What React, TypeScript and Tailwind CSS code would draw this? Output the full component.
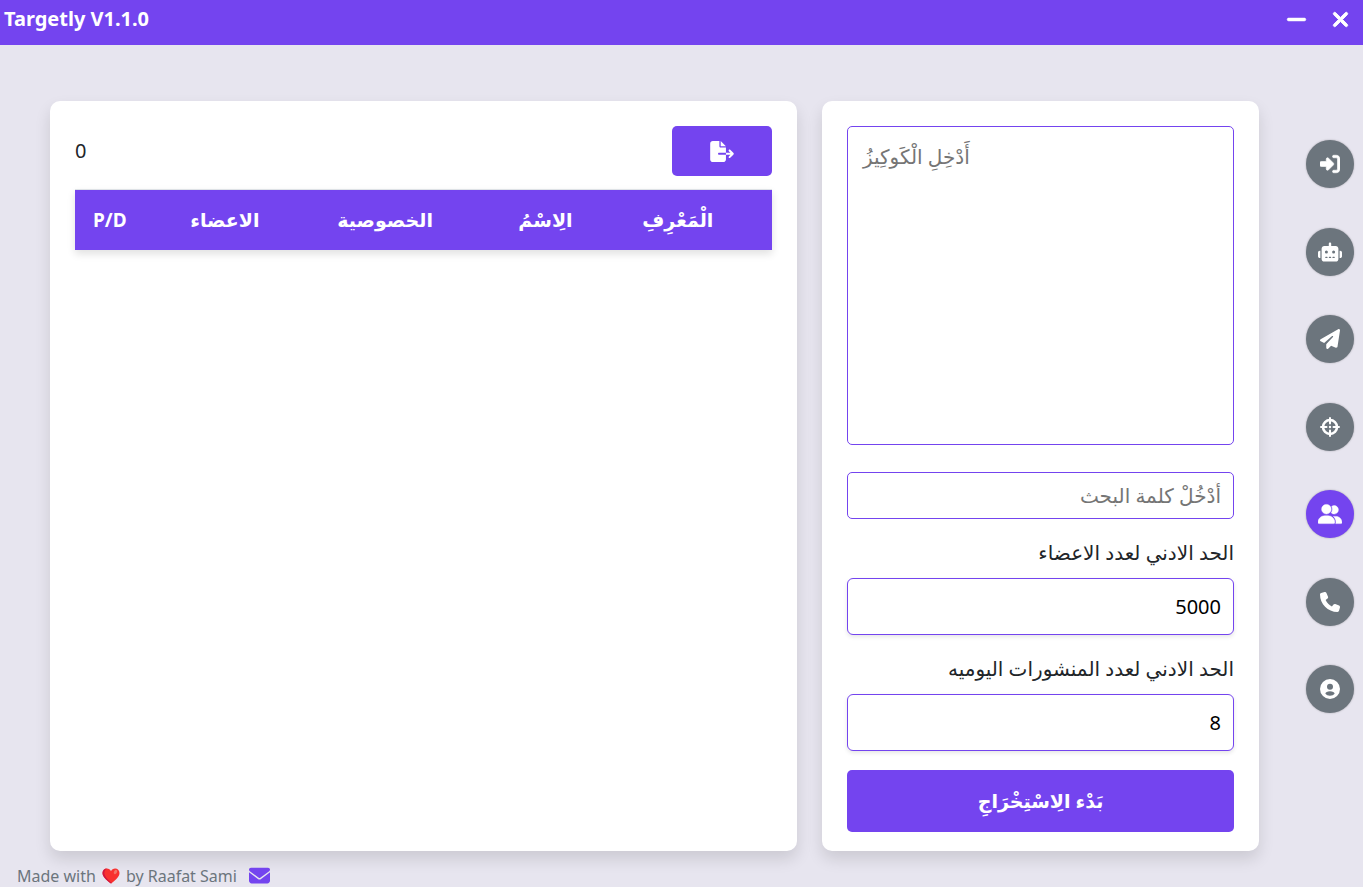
import React from "react";
import {
  FaMinus,
  FaXmark,
  FaRightToBracket,
  FaRobot,
  FaPaperPlane,
  FaUserGroup,
  FaPhone,
  FaFileExport,
  FaEnvelope,
} from "react-icons/fa6";

function AccountIcon() {
  return (
    <svg viewBox="0 0 20 20" className="size-5" aria-hidden="true">
      <path
        fill="currentColor"
        fillRule="evenodd"
        d="M10 0a10 10 0 1 0 0 20a10 10 0 0 0 0-20ZM10 4.700a3 3 0 1 1 0 6a3 3 0 0 1 0-6ZM5.400 14.800C5.400 13.300 7.400 12.300 10 12.300S14.600 13.300 14.600 14.800C13.600 16 12 16.700 10 16.700S6.400 16 5.400 14.800Z"
      />
    </svg>
  );
}

function TargetIcon() {
  return (
    <svg viewBox="0 0 20 20" className="size-5" fill="none" stroke="currentColor" strokeLinecap="round" aria-hidden="true">
      <circle cx="10" cy="10" r="7" strokeWidth="2.600" />
      <path d="M10 1v5.500M10 13.500V19M1 10h5.500M13.500 10H19" strokeWidth="2" />
      <circle cx="10" cy="10" r="1.200" fill="currentColor" stroke="none" />
    </svg>
  );
}

const navItems = [
  { label: "تسجيل الدخول", icon: <FaRightToBracket size={20} strokeWidth={16} stroke="currentColor" /> },
  { label: "الروبوت", icon: <FaRobot size={24} /> },
  { label: "إرسال", icon: <FaPaperPlane size={20} /> },
  { label: "استهداف", icon: <TargetIcon /> },
  { label: "المجموعات", icon: <FaUserGroup size={24} strokeWidth={12} stroke="currentColor" />, active: true },
  { label: "الهاتف", icon: <FaPhone size={20} /> },
  { label: "الحساب", icon: <AccountIcon /> },
];

const columns = [
  { title: "P/D", width: "w-[10%]" },
  { title: "الاعضاء", width: "w-[23%]" },
  { title: "الخصوصية", width: "w-[23%]" },
  { title: "الِاسْمُ", width: "w-[23%]" },
  { title: "الْمَعْرِفِ", width: "pr-[42px]" },
];

function Heart() {
  return (
    <svg viewBox="0 0 36 32" className="h-4 w-[18px]" role="img" aria-label="love">
      <path
        d="M18 31C13 27 1 19 1 10C1 4.500 5 1 9.700 1C13.500 1 16.500 3 18 6.500C19.500 3 22.500 1 26.300 1C31 1 35 4.500 35 10C35 19 23 27 18 31Z"
        fill="#f8312f"
      />
      <path
        d="M1 10C1 4.500 5 1 9.700 1C5 4 3.500 9 5.500 14C8 20 14 26 19.500 29.800L18 31C13 27 1 19 1 10Z"
        fill="#d0163f"
      />
      <ellipse cx="27" cy="8" rx="3" ry="4.500" transform="rotate(30 27 8)" fill="#f37366" />
    </svg>
  );
}

function NumberField({ id, label, value }: { id: string; label: string; value: string }) {
  return (
    <div className="flex flex-col">
      <label htmlFor={id} dir="rtl" className="pt-[19px] pb-[10px] text-[20px] leading-[30px] text-[#212529]">
        {label}
      </label>
      <input
        id={id}
        type="text"
        inputMode="numeric"
        defaultValue={value}
        className="h-[57px] w-full rounded-md border border-[#7444ef] bg-white px-3 text-right text-[20px] text-black shadow-[0_2px_4px_rgba(0,0,0,0.1)] outline-none"
      />
    </div>
  );
}

export default function App() {
  return (
    <div className="flex min-h-screen flex-col bg-[#e7e5ef] font-['Noto_Sans','DejaVu_Sans',sans-serif] text-[#212529]">
      <header className="flex h-[45px] items-start justify-between bg-[#7444ef] px-1 text-white">
        <h1 className="text-[20px] leading-[38px] font-bold">Targetly V1.1.0</h1>
        <div className="flex gap-5 pr-[7px]">
          <button type="button" aria-label="Minimize" className="flex h-[38px] w-6 items-center justify-center">
            <FaMinus size={23} strokeWidth={12} stroke="currentColor" />
          </button>
          <button type="button" aria-label="Close" className="flex h-[38px] w-6 items-center justify-center">
            <FaXmark size={23} strokeWidth={20} stroke="currentColor" />
          </button>
        </div>
      </header>

      <div className="flex flex-1 pt-14">
        <main className="flex flex-1 gap-[25px] pl-[50px]">
          <section className="flex min-w-0 flex-1 flex-col rounded-[10px] bg-white p-[25px] shadow-[0_8px_16px_rgba(0,0,0,0.12)]">
            <div className="flex items-center justify-between">
              <output className="text-[20px]">0</output>
              <button
                type="button"
                aria-label="Export"
                className="flex h-[50px] w-[100px] items-center justify-center rounded-[5px] bg-[#7444ef] text-white"
              >
                <FaFileExport size={24} className="h-[21px]" />
              </button>
            </div>
            <table className="mt-[13px] w-full table-fixed border-t border-[#dee2e6] shadow-[0_4px_8px_rgba(0,0,0,0.12)]">
              <thead>
                <tr className="h-[60px] bg-[#7444ef] text-[19px] text-white">
                  {columns.map((column) => (
                    <th key={column.title} scope="col" className={`${column.width} text-center font-bold`}>
                      {column.title}
                    </th>
                  ))}
                </tr>
              </thead>
            </table>
          </section>

          <form
            className="flex w-[437px] flex-col rounded-[10px] bg-white px-[25px] pt-[25px] pb-[19px] shadow-[0_8px_16px_rgba(0,0,0,0.12)]"
            onSubmit={(event) => event.preventDefault()}
          >
            <textarea
              aria-label="أَدْخِلِ الْكَوكِيزُ"
              placeholder="أَدْخِلِ الْكَوكِيزُ"
              className="min-h-[160px] w-full flex-1 resize-none rounded-[5px] border border-[#7444ef] px-[15px] py-[15px] text-[20px] leading-[30px] outline-none placeholder:text-[#757575]"
            />
            <input
              type="text"
              dir="rtl"
              aria-label="أَدْخُلْ كلمة البحث"
              placeholder="أَدْخُلْ كلمة البحث"
              className="mt-[27px] h-[47px] w-full rounded-[5px] border border-[#7444ef] px-3 text-[20px] outline-none placeholder:leading-[45px] placeholder:text-[#757575]"
            />
            <NumberField id="min-members" label="الحد الادني لعدد الاعضاء" value="5000" />
            <NumberField id="min-posts" label="الحد الادني لعدد المنشورات اليوميه" value="8" />
            <button
              type="submit"
              className="mt-[19px] h-[62px] w-full rounded-[5px] bg-[#7444ef] text-[19px] font-bold text-white"
            >
              بَدْء الِاسْتِخْرَاجِ
            </button>
          </form>
        </main>

        <nav className="mt-[39px] flex h-[573px] w-[104px] flex-col items-end justify-between pr-[9px]">
          {navItems.map((item) => (
            <button
              key={item.label}
              type="button"
              aria-label={item.label}
              className={`flex size-12 items-center justify-center rounded-full text-white shadow-[0_0_2px_rgba(0,0,0,0.3)] ${
                item.active ? "bg-[#7444ef]" : "bg-[#6c757d]"
              }`}
            >
              {item.icon}
            </button>
          ))}
        </nav>
      </div>

      <footer className="flex h-9 items-center pt-[13px] pl-[17px] text-[16px] text-[#6c757d]">
        <span>Made with</span>
        <span className="mx-[6px]">
          <Heart />
        </span>
        <span>by Raafat Sami</span>
        <a href="mailto:" aria-label="Email" className="ml-3 text-[#7444ef]">
          <FaEnvelope size={21} />
        </a>
      </footer>
    </div>
  );
}
